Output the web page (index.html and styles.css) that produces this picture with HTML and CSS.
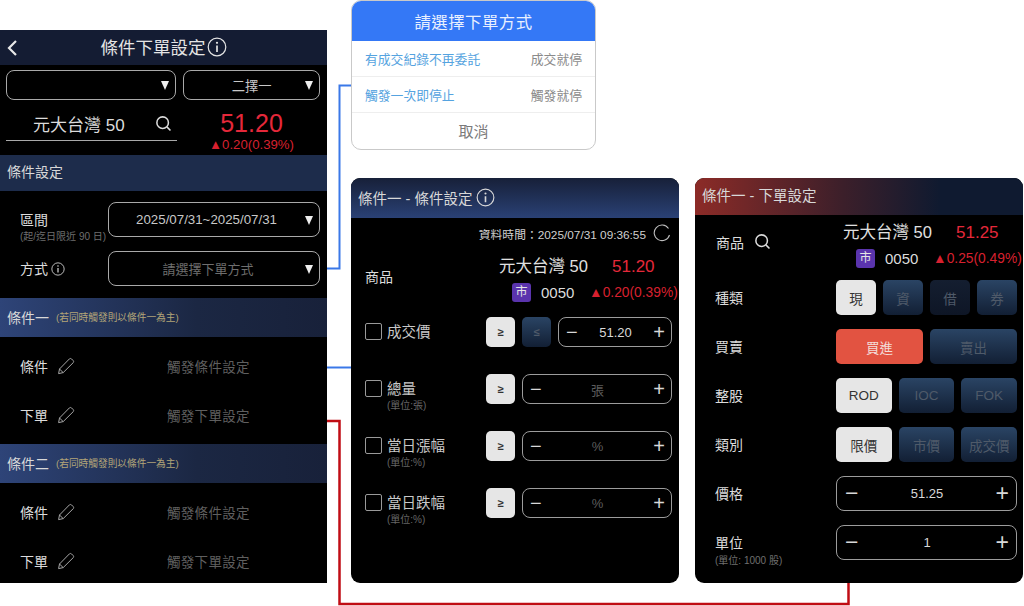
FILE: index.html
```html
<!DOCTYPE html>
<html lang="zh-Hant">

<head>
    <meta charset="UTF-8">
    <title>條件下單設定</title>
    <link rel="stylesheet" href="styles.css">
</head>

<body>
    <svg class="defs" width="0" height="0">
        <symbol id="i-info" viewBox="0 0 20 20">
            <circle cx="10" cy="10" r="8.8" fill="none" stroke="currentColor" stroke-width="1.2" />
            <circle cx="10" cy="5.8" r="1.1" fill="currentColor" />
            <path d="M10 8.6v6.4" stroke="currentColor" stroke-width="1.7" fill="none" />
        </symbol>
        <symbol id="i-search" viewBox="0 0 20 20">
            <circle cx="9" cy="9" r="6.8" fill="none" stroke="currentColor" stroke-width="1.8" />
            <path d="M14 14l4.2 4.2" stroke="currentColor" stroke-width="1.8" fill="none" />
        </symbol>
        <symbol id="i-pencil" viewBox="0 0 18 18">
            <path d="M1.6 16.6l.9-4.6L12.4 1.9c.6-.6 1.5-.6 2.1 0l1.7 1.7c.6.6.6 1.5 0 2.1L6.200 15.600z M2.500 12l3.700 3.600" fill="none" stroke="currentColor" stroke-width="1" />
        </symbol>
    </svg>

    <!-- Main screen -->
    <section class="screen main-screen">
        <header class="top-bar">
            <svg class="back" width="12" height="18" viewBox="0 0 12 18"><path d="M10 2L3 9l7 7" fill="none" stroke="#e8e8e8" stroke-width="2.200" /></svg>
            <span>條件下單設定</span>
            <svg class="top-info" width="20" height="20"><use href="#i-info" /></svg>
        </header>
        <div class="select-row">
            <div class="select select-wide"><i class="caret"></i></div>
            <div class="select select-narrow"><span>二擇一</span><i class="caret"></i></div>
        </div>
        <div class="quote-row">
            <div class="search-box">
                <span>元大台灣 50</span>
                <svg width="17" height="17"><use href="#i-search" /></svg>
            </div>
            <div class="quote">
                <div class="quote-price">51.20</div>
                <div class="quote-change">▲0.20(0.39%)</div>
            </div>
        </div>
        <div class="band band-flat">條件設定</div>
        <div class="field-row field-first">
            <div class="field-label">區間<small>(起/迄日限近 90 日)</small></div>
            <div class="select select-field"><span>2025/07/31~2025/07/31</span><i class="caret"></i></div>
        </div>
        <div class="field-row">
            <div class="field-label field-inline">方式<svg width="14" height="14"><use href="#i-info" /></svg></div>
            <div class="select select-field select-muted"><span>請選擇下單方式</span><i class="caret"></i></div>
        </div>
        <div class="band band-first">條件一<small>(若同時觸發則以條件一為主)</small></div>
        <div class="set-row"><span>條件</span><svg width="18" height="18"><use href="#i-pencil" /></svg><em>觸發條件設定</em></div>
        <div class="set-row"><span>下單</span><svg width="18" height="18"><use href="#i-pencil" /></svg><em>觸發下單設定</em></div>
        <div class="band band-second">條件二<small>(若同時觸發則以條件一為主)</small></div>
        <div class="set-row"><span>條件</span><svg width="18" height="18"><use href="#i-pencil" /></svg><em>觸發條件設定</em></div>
        <div class="set-row"><span>下單</span><svg width="18" height="18"><use href="#i-pencil" /></svg><em>觸發下單設定</em></div>
    </section>

    <!-- Method popup -->
    <section class="popup">
        <header class="popup-title">請選擇下單方式</header>
        <div class="popup-row"><span class="popup-link">有成交紀錄不再委託</span><span class="popup-note">成交就停</span></div>
        <div class="popup-row"><span class="popup-link">觸發一次即停止</span><span class="popup-note">觸發就停</span></div>
        <div class="popup-cancel">取消</div>
    </section>

    <!-- Condition settings -->
    <section class="screen card cond-card">
        <header class="card-head cond-head">條件一 - 條件設定<svg width="19" height="19"><use href="#i-info" /></svg></header>
        <div class="data-time">
            資料時間：2025/07/31 09:36:55
            <svg width="18" height="18" viewBox="0 0 18 18"><path d="M15.500 4.500A7.800 7.800 0 1 0 16.500 11" fill="none" stroke="#bdbdbd" stroke-width="1.100" /></svg>
        </div>
        <div class="product cond-product">
            <div class="product-label">商品</div>
            <div class="product-info">
                <div class="product-top"><span class="name">元大台灣 50</span><span class="price">51.20</span></div>
                <div class="product-bottom"><b class="badge">市</b><span class="code">0050</span><span class="change">▲0.20(0.39%)</span></div>
            </div>
        </div>
        <div class="cond-row cond-row-first">
            <i class="check"></i>
            <div class="cond-label">成交價</div>
            <div class="btn btn-on btn-sym">≥</div>
            <div class="btn btn-off btn-sym">≤</div>
            <div class="stepper stepper-short"><span>−</span><b>51.20</b><span>+</span></div>
        </div>
        <div class="cond-row">
            <i class="check"></i>
            <div class="cond-label">總量<small>(單位:張)</small></div>
            <div class="btn btn-on btn-sym">≥</div>
            <div class="stepper stepper-long"><span>−</span><b class="dim">張</b><span>+</span></div>
        </div>
        <div class="cond-row">
            <i class="check"></i>
            <div class="cond-label">當日漲幅<small>(單位:%)</small></div>
            <div class="btn btn-on btn-sym">≥</div>
            <div class="stepper stepper-long"><span>−</span><b class="dim">%</b><span>+</span></div>
        </div>
        <div class="cond-row">
            <i class="check"></i>
            <div class="cond-label">當日跌幅<small>(單位:%)</small></div>
            <div class="btn btn-on btn-sym">≥</div>
            <div class="stepper stepper-long"><span>−</span><b class="dim">%</b><span>+</span></div>
        </div>
    </section>

    <!-- Order settings -->
    <section class="screen card order-card">
        <header class="card-head order-head">條件一 - 下單設定</header>
        <div class="product order-product">
            <div class="product-label">商品<svg width="17" height="17"><use href="#i-search" /></svg></div>
            <div class="product-info">
                <div class="product-top"><span class="name">元大台灣 50</span><span class="price">51.25</span></div>
                <div class="product-bottom"><b class="badge">市</b><span class="code">0050</span><span class="change">▲0.25(0.49%)</span></div>
            </div>
        </div>
        <div class="order-row order-row-first">
            <div class="order-label">種類</div>
            <div class="btn-group">
                <div class="btn btn-on">現</div>
                <div class="btn btn-off">資</div>
                <div class="btn btn-off btn-darker">借</div>
                <div class="btn btn-off">券</div>
            </div>
        </div>
        <div class="order-row">
            <div class="order-label">買賣</div>
            <div class="btn-group">
                <div class="btn btn-buy">買進</div>
                <div class="btn btn-off">賣出</div>
            </div>
        </div>
        <div class="order-row">
            <div class="order-label">整股</div>
            <div class="btn-group">
                <div class="btn btn-on">ROD</div>
                <div class="btn btn-off">IOC</div>
                <div class="btn btn-off">FOK</div>
            </div>
        </div>
        <div class="order-row">
            <div class="order-label">類別</div>
            <div class="btn-group">
                <div class="btn btn-on">限價</div>
                <div class="btn btn-off">市價</div>
                <div class="btn btn-off">成交價</div>
            </div>
        </div>
        <div class="order-row">
            <div class="order-label">價格</div>
            <div class="stepper stepper-full"><span>−</span><b>51.25</b><span>+</span></div>
        </div>
        <div class="order-row">
            <div class="order-label">單位<small>(單位: 1000 股)</small></div>
            <div class="stepper stepper-full"><span>−</span><b>1</b><span>+</span></div>
        </div>
    </section>

    <!-- Connector lines -->
    <svg class="lines" width="1024" height="606">
        <path d="M327 268.500H339.500V85.500H351" fill="none" stroke="#3a78e8" stroke-width="2" />
        <path d="M327 367.500H351" fill="none" stroke="#3a78e8" stroke-width="2" />
        <path d="M327 421H339.500V604H848.500V583" fill="none" stroke="#c00d14" stroke-width="2.500" />
    </svg>
</body>

</html>
```

FILE: styles.css
```css
* {
    box-sizing: border-box;
}

body {
    margin: 0;
    width: 1024px;
    height: 606px;
    position: relative;
    overflow: hidden;
    background-color: #fff;
    font-family: "Liberation Sans", "Noto Sans CJK TC", sans-serif;
    color: #e4e4e4;
}

.defs {
    position: absolute;
}

.lines {
    position: absolute;
    left: 0;
    top: 0;
}

small {
    display: block;
    font-size: 10px;
    font-weight: normal;
    color: #6f6f6f;
}

.screen {
    position: absolute;
    background-color: #000;
}

/* Main screen */
.main-screen {
    left: 0;
    top: 30px;
    width: 327px;
    height: 553px;
    overflow: hidden;
    display: flex;
    flex-direction: column;
}

.main-screen > * {
    flex: none;
}

.top-bar {
    height: 35px;
    background-color: #141c33;
    display: flex;
    align-items: center;
    justify-content: center;
    font-size: 17.500px;
    position: relative;
    padding: 0 0 2px 0;
}

.back {
    position: absolute;
    left: 6px;
    top: 9px;
}

.top-info {
    margin-left: 1px;
    color: #e4e4e4;
}

.select-row {
    display: flex;
    gap: 7px;
    padding: 5px 7px 0 6px;
}

.select {
    height: 30px;
    border: 1px solid #a9a9a9;
    border-radius: 8px;
    display: flex;
    align-items: center;
    position: relative;
    font-size: 13.300px;
    color: #c8c8c8;
}

.select span {
    flex: 1;
    text-align: center;
}

.caret {
    position: absolute;
    right: 6px;
    top: 50%;
    margin-top: -4px;
    border-left: 4.500px solid transparent;
    border-right: 4.500px solid transparent;
    border-top: 9px solid #eee;
}

.select-wide {
    width: 171px;
}

.select-narrow {
    width: 137px;
}

.quote-row {
    display: flex;
    height: 55px;
    padding-left: 6px;
}

.search-box {
    width: 171px;
    height: 41px;
    border-bottom: 1px solid #a9a9a9;
    display: flex;
    align-items: center;
    justify-content: space-between;
    padding: 7px 5px 0 27px;
    font-size: 17px;
    color: #dcdcdc;
}

.quote {
    flex: 1;
    text-align: center;
    padding-right: 1px;
}

.quote-price {
    font-size: 25px;
    line-height: 29px;
    padding-top: 9px;
    color: #e5283a;
}

.quote-change {
    font-size: 13.200px;
    line-height: 14px;
    color: #d7202f;
}

.band {
    height: 39px;
    padding: 0 0 2px 7px;
    display: flex;
    align-items: center;
    font-size: 14px;
    color: #d8d8d8;
    background: linear-gradient(to right, #2e4478, #1b2743 60%, #18213a);
}

.band small {
    display: inline;
    margin-left: 7px;
    font-size: 9.700px;
    color: #b3a578;
}

.band-flat {
    height: 36px;
    padding-bottom: 4px;
    background: #1d2c4b;
}

.field-row {
    display: flex;
    align-items: center;
    justify-content: space-between;
    padding: 0 7px 0 20px;
    margin-top: 14px;
}

.field-first {
    margin-top: 11px;
}

.field-label {
    font-size: 14px;
    line-height: 18px;
    color: #dcdcdc;
    white-space: nowrap;
}

.field-label small {
    line-height: 11px;
    margin: 2px 0 -13px;
}

.field-inline {
    display: flex;
    align-items: center;
    gap: 3px;
}

.select-field {
    width: 212px;
    height: 35px;
    padding-right: 15px;
}

.select-muted {
    padding-right: 12px;
    font-size: 13px;
    color: #6e6e6e;
}

.band-first {
    margin-top: 12px;
}

.set-row {
    height: 49px;
    display: flex;
    align-items: center;
    padding: 0 0 1px 20px;
    font-size: 14px;
    color: #dcdcdc;
}

.set-row svg {
    margin-left: 9px;
    color: #a8a8a8;
}

.set-row em {
    font-style: normal;
    margin-left: 92px;
    font-size: 13.500px;
    letter-spacing: .3px;
    color: #5f5f5f;
}

.band-first + .set-row {
    margin-top: 5px;
}

.band-second {
    margin-top: 4px;
}

.band-second + .set-row {
    margin-top: 5px;
}

/* Popup */
.popup {
    position: absolute;
    left: 351px;
    top: 0;
    width: 245px;
    height: 150px;
    background-color: #fff;
    border: 1px solid #c9c9c9;
    border-radius: 10px;
    overflow: hidden;
    display: flex;
    flex-direction: column;
}

.popup-title {
    height: 40px;
    background-color: #3478f6;
    color: #e9f0ff;
    display: flex;
    align-items: center;
    justify-content: center;
    font-size: 16.400px;
    letter-spacing: .5px;
}

.popup-row {
    height: 36px;
    display: flex;
    align-items: center;
    justify-content: space-between;
    padding: 0 13px;
    font-size: 12.800px;
    border-bottom: 1px solid #eee;
}

.popup-link {
    color: #55a3e0;
}

.popup-note {
    color: #8a8a8a;
}

.popup-cancel {
    flex: 1;
    display: flex;
    align-items: center;
    justify-content: center;
    padding-bottom: 2px;
    font-size: 15px;
    color: #7a7a7a;
}

/* Cards */
.card {
    top: 178px;
    width: 328px;
    height: 405px;
    border-radius: 9px;
    overflow: hidden;
}

.cond-card {
    left: 351px;
}

.order-card {
    left: 695px;
}

.card-head {
    display: flex;
    align-items: center;
    padding-left: 7px;
    font-size: 14.500px;
    color: #d8d8d8;
}

.cond-head {
    height: 40px;
    gap: 4px;
    padding-bottom: 2px;
    background: linear-gradient(to bottom, #172039, #2a4175);
}

.order-head {
    height: 37px;
    padding-bottom: 4px;
    background: linear-gradient(to right, #8c2b27, #3c1f2a 45%, #0f1a30 75%);
}

.data-time {
    display: flex;
    align-items: center;
    justify-content: flex-end;
    gap: 7px;
    padding: 0 8px 0 0;
    font-size: 11.800px;
    height: 30px;
    color: #cfcfcf;
}

.product {
    display: flex;
    position: relative;
}

.cond-product {
    height: 51px;
    margin-top: 5px;
}

.order-product {
    height: 52px;
    margin-top: 4px;
}

.product-label {
    display: flex;
    align-items: center;
    gap: 10px;
    font-size: 14px;
    color: #dcdcdc;
}

.cond-product .product-label {
    padding: 0 0 6px 14px;
}

.order-product .product-label {
    padding: 0 0 7px 21px;
}

.product-info {
    position: absolute;
    right: 0;
    top: 0;
    width: 181px;
}

.product-top {
    height: 26px;
    display: flex;
    align-items: baseline;
    padding-left: 1px;
    font-size: 16.500px;
}

.name {
    width: 113px;
    color: #e0e0e0;
}

.price {
    font-size: 17px;
    color: #e5283a;
}

.product-bottom {
    height: 26px;
    display: flex;
    align-items: center;
    padding-left: 14px;
}

.badge {
    width: 19px;
    height: 19px;
    background-color: #5a34ad;
    border-radius: 3px;
    font-size: 12px;
    font-weight: normal;
    text-align: center;
    line-height: 19px;
}

.code {
    margin-left: 10px;
    width: 48px;
    font-size: 15px;
    color: #dcdcdc;
}

.change {
    font-size: 13.800px;
    white-space: nowrap;
    color: #d7202f;
}

.cond-row {
    height: 30px;
    margin-top: 27px;
    display: flex;
    align-items: center;
    padding-left: 14px;
    gap: 7px;
}

.cond-row-first {
    margin-top: 13px;
}

.check {
    width: 17px;
    height: 17px;
    border: 1.500px solid #9a9a9a;
    border-radius: 2px;
    margin: -1px -2px 0 0;
}

.cond-label {
    width: 85px;
    height: 30px;
    margin-right: 7px;
    font-size: 14.500px;
    line-height: 30px;
    color: #c8c8c8;
    white-space: nowrap;
}

.cond-label small {
    line-height: 10px;
    margin-top: -3px;
    color: #666;
}

.btn {
    display: flex;
    align-items: center;
    justify-content: center;
    border-radius: 5px;
    font-size: 13.500px;
}

.btn-sym {
    width: 29px;
    height: 30px;
    flex: none;
    font-size: 11px;
    font-weight: bold;
}

.btn-on {
    background-color: #e6e6e6;
    color: #333;
}

.btn-off {
    background: linear-gradient(to bottom, #2a4464, #121f34);
    color: #4f5a69;
}

.btn-darker {
    background: linear-gradient(to bottom, #141e30, #0e1626);
}

.btn-buy {
    background-color: #e25341;
    color: #f3dcd8;
}

.stepper {
    display: flex;
    align-items: center;
    justify-content: space-between;
    border: 1px solid #9c9c9c;
    border-radius: 8px;
    padding: 0 6px 0 7px;
    font-size: 13px;
}

.stepper span {
    font-size: 20px;
    line-height: 1;
    color: #d8d8d8;
}

.stepper b {
    font-weight: normal;
    color: #d8d8d8;
}

.stepper b.dim {
    color: #5c5c5c;
}

.stepper-short {
    width: 114px;
    height: 30px;
}

.stepper-long {
    width: 150px;
    height: 30px;
}

.stepper-full {
    width: 181px;
    height: 35px;
    padding: 0 7px 0 8px;
}

.stepper-full span {
    font-size: 23px;
}

.order-row {
    height: 35px;
    margin-top: 14px;
    display: flex;
    align-items: center;
    justify-content: space-between;
    padding: 0 6px 0 20px;
}

.order-row-first {
    margin-top: 9px;
}

.order-label {
    font-size: 14px;
    line-height: 20px;
    color: #dcdcdc;
    white-space: nowrap;
}

.order-label small {
    line-height: 11px;
    margin: 2px 0 -13px;
}

.btn-group {
    width: 181px;
    height: 35px;
    display: flex;
    gap: 7px;
}

.btn-group .btn {
    flex: 1;
}
```
